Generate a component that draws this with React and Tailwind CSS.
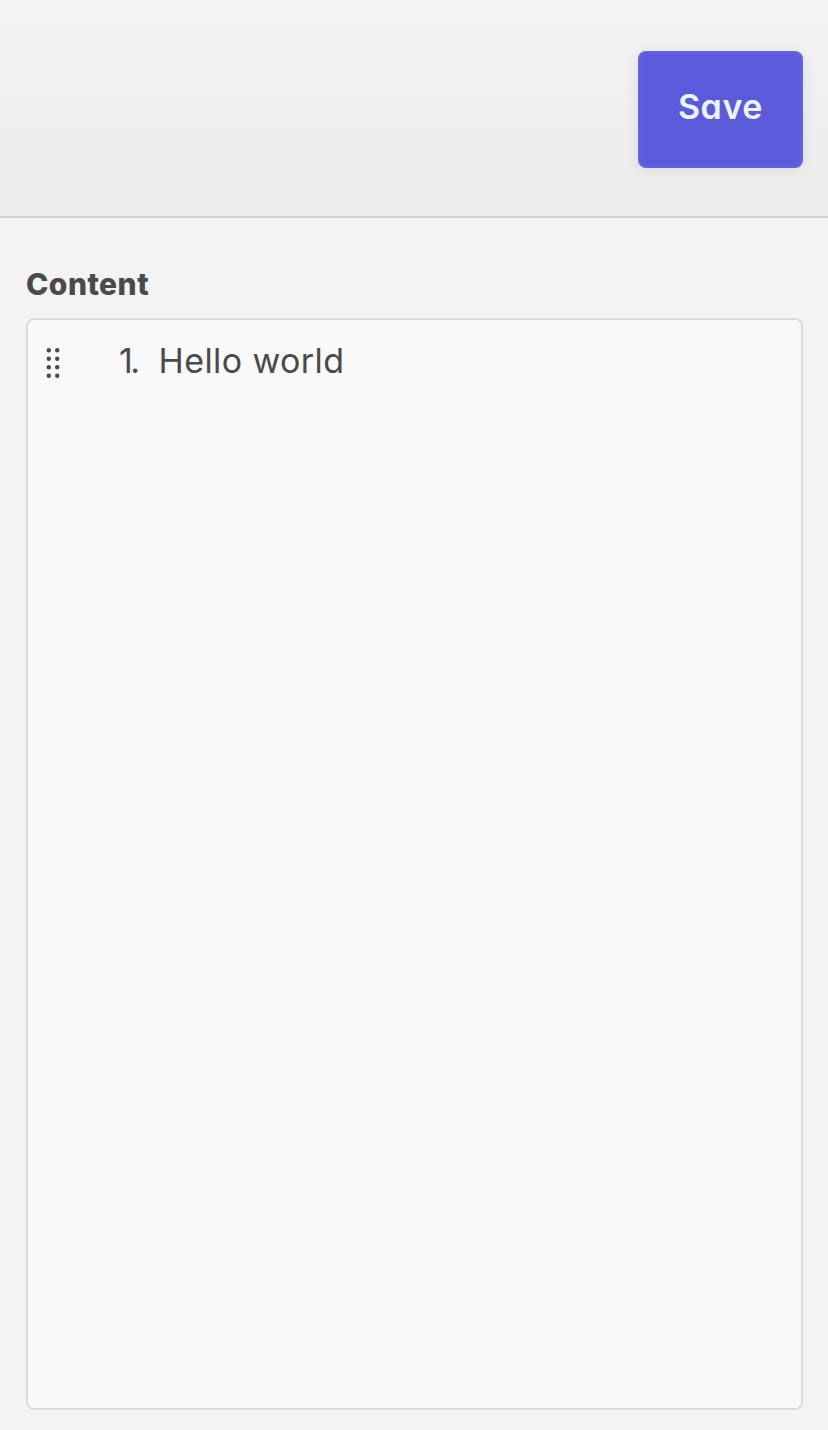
const dots = [350, 358.5, 367, 375.5];

function GripIcon() {
  return (
    <svg className="block h-8 w-4 shrink-0" viewBox="45 347 16 32" fill="#4a4a4a" aria-hidden="true">
      {dots.map((y) => (
        <g key={y}>
          <circle cx="48.8" cy={y + 0.3} r="2.2" />
          <circle cx="57.2" cy={y + 0.3} r="2.2" />
        </g>
      ))}
    </svg>
  );
}

export default function App() {
  return (
    <div className="flex h-[1430px] w-[828px] flex-col overflow-hidden bg-[#f3f3f3] font-['Inter',sans-serif] text-[#4a4a4a] [font-feature-settings:'cv11']">
      <header className="flex h-[218px] shrink-0 items-start justify-end border-b-2 border-[#d0d0d0] bg-linear-to-b from-[#f3f3f3] to-[#ececec] pt-[51px] pr-[25px]">
        <button className="flex h-[117px] w-[165px] items-center justify-center rounded-lg bg-[#5a5adb] pb-1.5 text-[34px] leading-none font-semibold text-[#edf4ff] shadow-[0_2px_14px_rgba(0,0,0,0.09),inset_0_0_5px_rgba(255,255,255,0.15)]">
          <span className="tracking-[0.6px]">Save</span>
        </button>
      </header>
      <main className="flex flex-1 flex-col px-[26px] pt-[49px] pr-[25px] pb-5">
        <div className="flex h-[51px] items-start text-[30px] leading-[34px] font-extrabold">
          <span className="tracking-[0.5px]">Content</span>
        </div>
        <section className="flex flex-1 items-start rounded-lg border-2 border-[#dbdbdb] bg-[#f9f9f9] pt-[27px] pl-[17px]">
          <GripIcon />
          <div className="ml-[58px] flex text-[34px] leading-[28px]">
            <span className="w-[39.5px] tracking-[-2.5px]">1.</span>
            <span className="tracking-[0.4px]">Hello world</span>
          </div>
        </section>
      </main>
    </div>
  );
}
